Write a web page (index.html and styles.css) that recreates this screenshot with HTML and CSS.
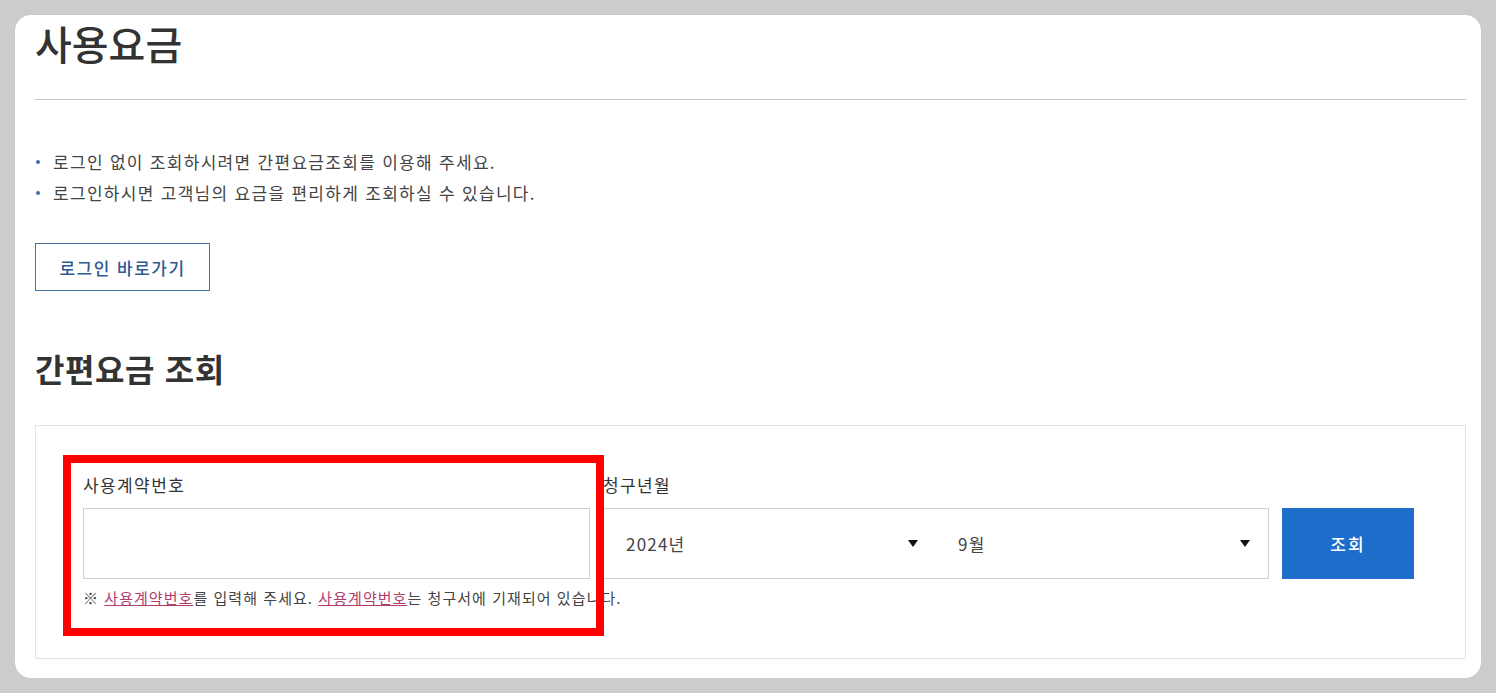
FILE: index.html
```html
<!DOCTYPE html>
<html lang="ko">
<head>
<meta charset="utf-8">
<title>사용요금</title>
<link rel="stylesheet" href="styles.css">
</head>
<body>
<div class="card">
  <h1 class="title">사용요금</h1>
  <hr class="divider">
  <ul class="bullets">
    <li>로그인 없이 조회하시려면 간편요금조회를 이용해 주세요.</li>
    <li>로그인하시면 고객님의 요금을 편리하게 조회하실 수 있습니다.</li>
  </ul>
  <button class="login-btn" type="button">로그인 바로가기</button>
  <h2 class="subtitle">간편요금 조회</h2>
  <div class="query-box">
    <div class="row">
      <div class="field field-contract">
        <label class="label">사용계약번호</label>
        <input class="text-input" type="text">
        <p class="note">※ <a href="#">사용계약번호</a>를 입력해 주세요. <a href="#">사용계약번호</a>는 청구서에 기재되어 있습니다.</p>
      </div>
      <div class="field field-month">
        <label class="label">청구년월</label>
        <div class="selects">
          <div class="select"><span>2024년</span><span class="arrow"></span></div>
          <div class="select"><span>9월</span><span class="arrow"></span></div>
        </div>
      </div>
      <button class="search-btn" type="button">조회</button>
    </div>
    <div class="highlight"></div>
  </div>
</div>
</body>
</html>
```
FILE: styles.css
```css
* { box-sizing: border-box; }
html, body { margin: 0; padding: 0; }
body {
  background: #cccccc;
  padding: 15px;
  font-family: "Noto Sans CJK KR", "Noto Sans", sans-serif;
  color: #333;
}
.card {
  background: #fff;
  border-radius: 16px;
  height: 663px;
  padding: 0 15px 0 20px;
  overflow: hidden;
}
.title {
  margin: 0;
  padding-top: 4px;
  font-size: 40px;
  font-weight: 500;
  line-height: 48px;
  color: #333;
}
.divider {
  border: 0;
  border-top: 1px solid #c8c8c8;
  margin: 32px 0 0 0;
}
.bullets {
  list-style: none;
  margin: 46px 0 0 0;
  padding: 0;
}
.bullets li {
  position: relative;
  padding-left: 18px;
  font-size: 17px;
  letter-spacing: 1.3px;
  line-height: 31px;
  color: #444;
}
.bullets li::before {
  content: "";
  position: absolute;
  left: 1px;
  top: 14px;
  width: 4px;
  height: 4px;
  border-radius: 50%;
  background: #3d6fa8;
}
.login-btn {
  display: block;
  margin-top: 35px;
  width: 175px;
  height: 48px;
  background: #fff;
  border: 1px solid #4674a6;
  color: #2f5b8f;
  font-family: inherit;
  font-size: 17px;
  letter-spacing: 1.5px;
  font-weight: 500;
  padding: 0;
}
.subtitle {
  margin: 57px 0 0 0;
  font-size: 32px;
  font-weight: 700;
  letter-spacing: 0.6px;
  line-height: 40px;
  color: #333;
}
.query-box {
  position: relative;
  margin-top: 37px;
  border: 1px solid #e3e3e3;
  height: 234px;
  padding: 47px 0 0 47px;
}
.row {
  display: flex;
  align-items: flex-start;
}
.label {
  display: block;
  font-size: 17px;
  letter-spacing: 1.4px;
  line-height: 24px;
  color: #333;
}
.field-contract { width: 507px; }
.text-input {
  display: block;
  width: 507px;
  height: 71px;
  margin-top: 11px;
  border: 1px solid #cfcfcf;
  background: #fff;
}
.note {
  margin: 4px 0 0 0;
  font-size: 15px;
  letter-spacing: 1.05px;
  line-height: 30px;
  color: #444;
  white-space: nowrap;
}
.note a {
  color: #b23d6c;
  text-decoration: underline;
}
.field-month {
  margin-left: 13px;
  width: 666px;
}
.selects {
  display: flex;
  margin-top: 11px;
  height: 71px;
  border: 1px solid #cfcfcf;
}
.select {
  flex: 1;
  display: flex;
  align-items: center;
  justify-content: space-between;
  padding: 0 18px 0 22px;
  font-size: 17px;
  letter-spacing: 1.2px;
  color: #444;
}
.arrow {
  width: 0;
  height: 0;
  border-left: 5px solid transparent;
  border-right: 5px solid transparent;
  border-top: 7px solid #111;
}
.search-btn {
  margin-left: 13px;
  margin-top: 35px;
  width: 132px;
  height: 71px;
  border: 0;
  background: #1d6dca;
  color: #fff;
  font-family: inherit;
  font-size: 17px;
  letter-spacing: 2px;
  font-weight: 500;
  padding: 0;
}
.highlight {
  position: absolute;
  left: 27px;
  top: 29px;
  width: 541px;
  height: 181px;
  border: 8px solid #ff0000;
  pointer-events: none;
}
```
